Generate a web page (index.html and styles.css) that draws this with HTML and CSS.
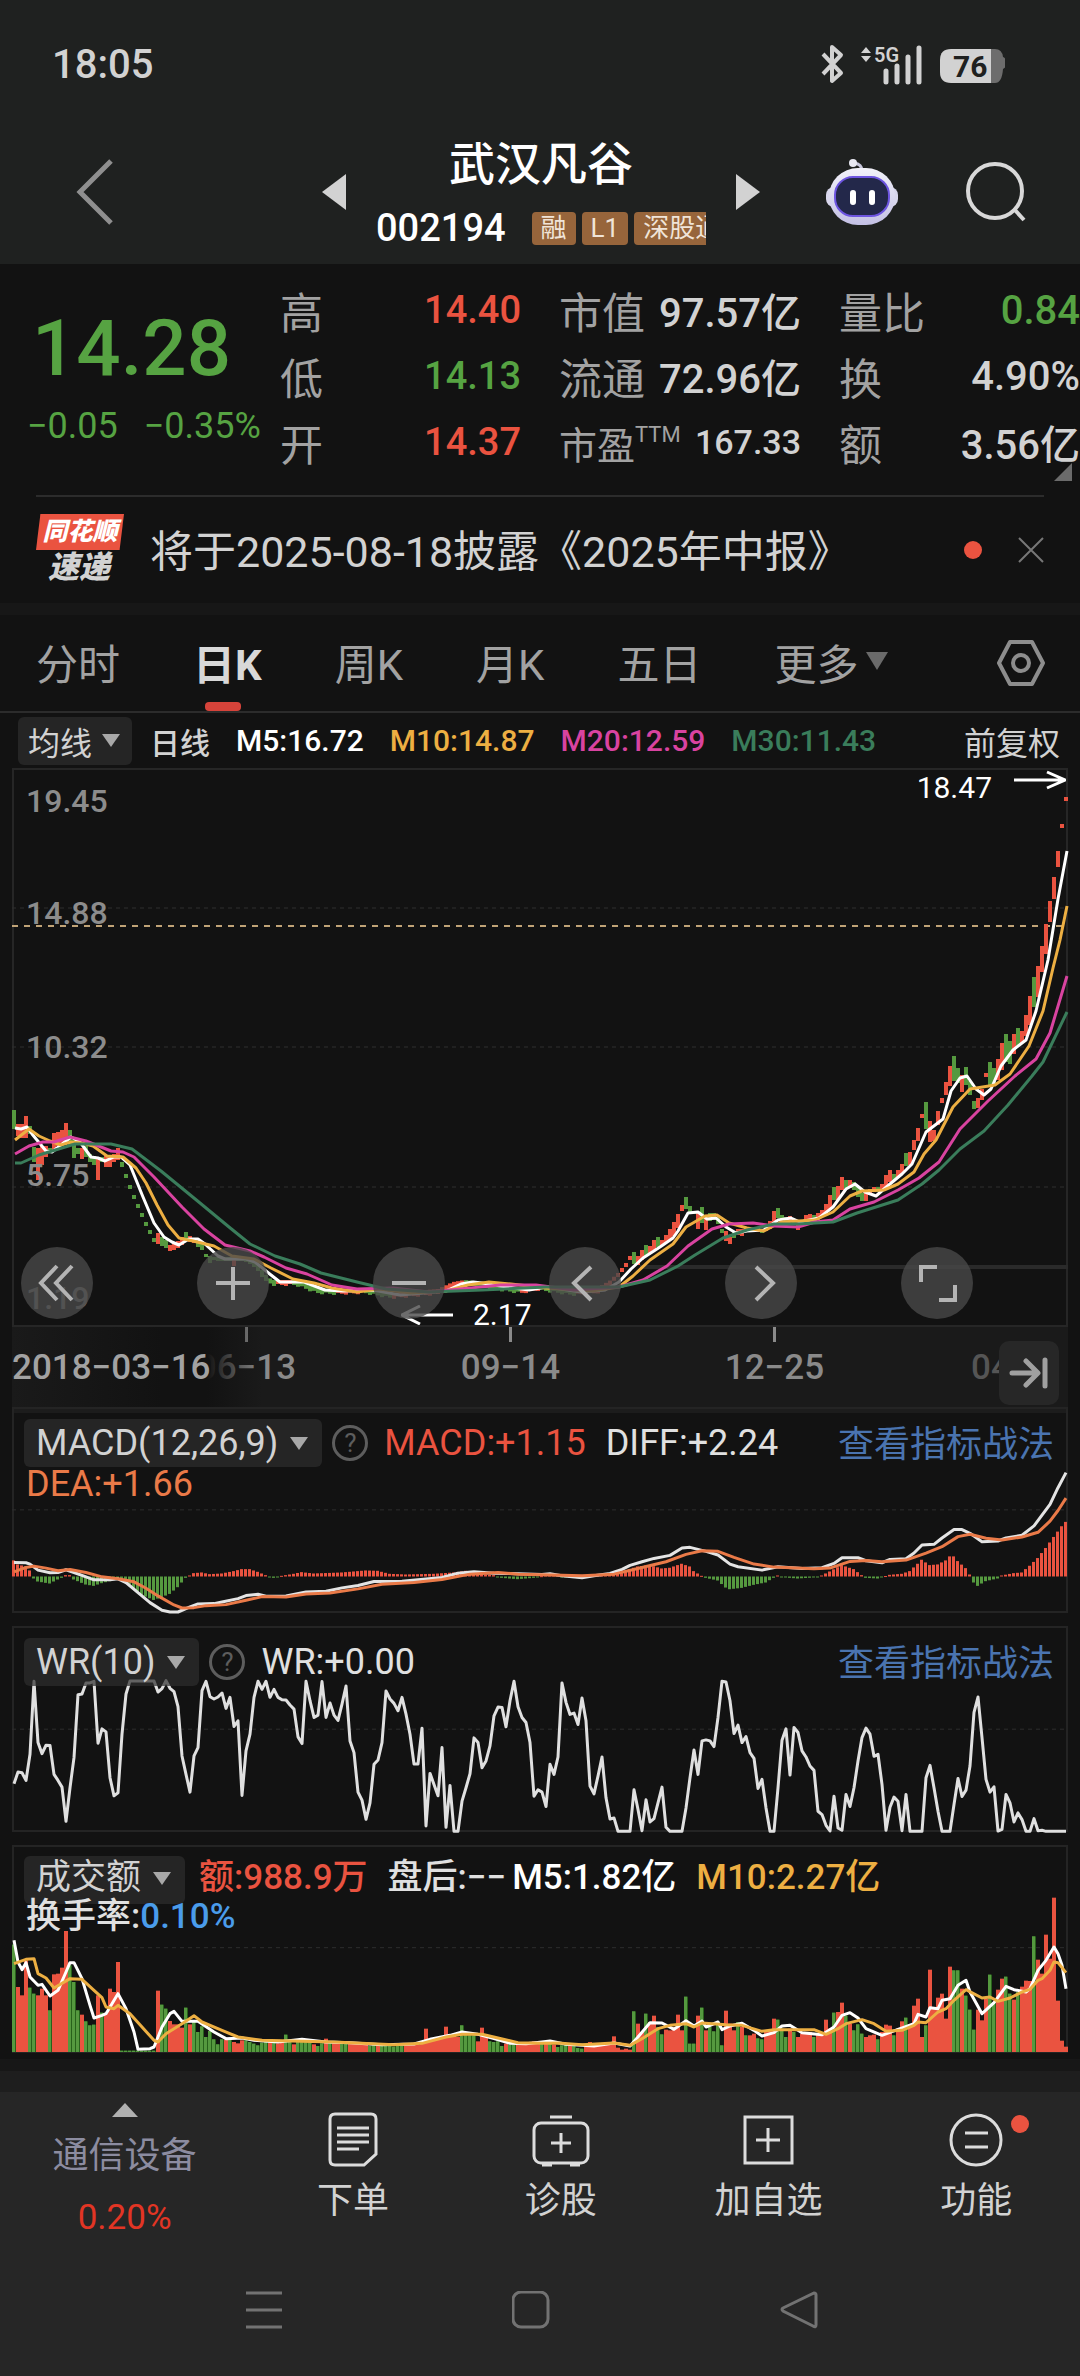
FILE: index.html
```html
<!DOCTYPE html>
<html lang="zh-CN">

<head>
    <meta charset="UTF-8">
    <meta name="viewport" content="width=device-width, initial-scale=1.0">
    <title>武汉凡谷 002194</title>
    <link rel="stylesheet" href="styles.css">
</head>

<body>
    <header class="top">
        <div class="status">
            <span class="clock">18:05</span>
            <svg class="status-icons" width="190" height="44" viewBox="0 0 190 44">
                <path d="M8 12 L26 31 L17 39 V5 L26 13 L8 32" fill="none" stroke="#d2d2d2" stroke-width="4" stroke-linejoin="round" />
                <path d="M46 11 L51 5 L56 11 Z M46 14 H56 L51 20 Z" fill="#d2d2d2" />
                <text x="59" y="20" class="net">5G</text>
                <path d="M71 40 V29 M82 40 V24 M93 40 V15 M104 40 V6" stroke="#d2d2d2" stroke-width="5" stroke-linecap="round" />
                <path d="M175 7 h5 q7 0 8 8 q3 1 3 5 v2 q0 4 -3 5 q-1 14 -8 14 h-5 z" fill="#6d6d6d" />
                <path d="M136 7 H176 V41 H136 Q125 41 125 30 V18 Q125 7 136 7 Z" fill="#d2d2d2" />
                <text x="138" y="35" class="level">76</text>
            </svg>
        </div>
        <div class="title-bar">
            <button class="icon-btn back" aria-label="返回">
                <svg width="40" height="66" viewBox="0 0 40 66">
                    <path d="M36 2 L5 33 L36 64" fill="none" stroke="#8f8f8f" stroke-width="5" />
                </svg>
            </button>
            <div class="stock">
                <button class="icon-btn" aria-label="上一只"><svg width="24" height="36"><path d="M24 0 V36 L0 18 Z" fill="#d2d2d2" /></svg></button>
                <div class="stock-name">
                    <h1>武汉凡谷</h1>
                    <div class="stock-code">
                        <span class="code">002194</span>
                        <span class="tags"><i>融</i><i>L1</i><i>深股通</i></span>
                    </div>
                </div>
                <button class="icon-btn" aria-label="下一只"><svg width="24" height="36"><path d="M0 0 V36 L24 18 Z" fill="#d2d2d2" /></svg></button>
            </div>
            <button class="icon-btn robot" aria-label="智能助手">
                <svg width="72" height="68" viewBox="0 0 72 68">
                    <defs>
                        <linearGradient id="shell" x1="0" y1="0" x2="0" y2="1">
                            <stop offset="0" stop-color="#f2f2fa" />
                            <stop offset="1" stop-color="#c3c0e4" />
                        </linearGradient>
                    </defs>
                    <path d="M36 13 Q36 6 28 5" fill="none" stroke="#c9c8dd" stroke-width="3" />
                    <circle cx="27" cy="5" r="4" fill="#e8e8f2" />
                    <rect x="0" y="29" width="72" height="20" rx="8" fill="#d8d7ec" />
                    <rect x="3" y="10" width="66" height="57" rx="29" fill="url(#shell)" />
                    <rect x="9" y="19" width="54" height="39" rx="18" fill="#23284a" stroke="#6d55e0" stroke-width="2" />
                    <path d="M27 35 V44 M46 35 V44" stroke="#fff" stroke-width="6" stroke-linecap="round" />
                </svg>
            </button>
            <button class="icon-btn search" aria-label="搜索">
                <svg width="64" height="64" viewBox="0 0 64 64">
                    <circle cx="31" cy="31" r="27" fill="none" stroke="#d8d8d8" stroke-width="4" />
                    <path d="M50 49 L60 60" stroke="#d8d8d8" stroke-width="4" />
                </svg>
            </button>
        </div>
    </header>

    <section class="quote">
        <div class="price">
            <strong>14.28</strong>
            <div class="change"><span>−0.05</span><span>−0.35%</span></div>
        </div>
        <dl class="col-a">
            <div><dt>高</dt><dd class="up">14.40</dd></div>
            <div><dt>低</dt><dd class="down">14.13</dd></div>
            <div><dt>开</dt><dd class="up">14.37</dd></div>
        </dl>
        <dl class="col-b">
            <div><dt>市值</dt><dd>97.57亿</dd></div>
            <div><dt>流通</dt><dd>72.96亿</dd></div>
            <div><dt class="pe">市盈<sup>TTM</sup></dt><dd class="pe-value">167.33</dd></div>
        </dl>
        <dl class="col-c">
            <div><dt>量比</dt><dd class="down">0.84</dd></div>
            <div><dt>换</dt><dd>4.90%</dd></div>
            <div><dt>额</dt><dd>3.56亿</dd></div>
        </dl>
        <svg class="expand" width="18" height="18"><path d="M18 0 V18 H0 Z" fill="#6b6b6b" /></svg>
    </section>

    <section class="notice">
        <div class="notice-logo"><b>同花顺</b><em>速递</em></div>
        <a href="#notice">将于2025-08-18披露《2025年中报》</a>
        <span class="dot"></span>
        <button class="icon-btn" aria-label="关闭">
            <svg width="26" height="26"><path d="M1 1 L25 25 M25 1 L1 25" stroke="#777" stroke-width="2" /></svg>
        </button>
    </section>

    <nav class="tabs">
        <button>分时</button>
        <button class="active">日K</button>
        <button>周K</button>
        <button>月K</button>
        <button>五日</button>
        <button>更多<svg class="caret" width="22" height="18"><path d="M0 0 H22 L11 18 Z" fill="#6a6a6a" /></svg></button>
        <button class="settings" aria-label="设置">
            <svg width="50" height="48" viewBox="0 0 50 48">
                <path d="M14 3 H36 L47 24 L36 45 H14 L3 24 Z" fill="none" stroke="#8d8d8d" stroke-width="4" stroke-linejoin="round" />
                <circle cx="25" cy="24" r="8" fill="none" stroke="#8d8d8d" stroke-width="4" />
            </svg>
        </button>
    </nav>

    <div class="ma-bar">
        <button class="chip">均线<svg class="caret" width="18" height="13"><path d="M0 0 H18 L9 13 Z" fill="#a8a8a8" /></svg></button>
        <span class="day">日线</span>
        <span class="m5">M5:16.72</span>
        <span class="m10">M10:14.87</span>
        <span class="m20">M20:12.59</span>
        <span class="m30">M30:11.43</span>
        <button class="adjust">前复权</button>
    </div>

    <main>
        <section class="kline">
            <svg id="kline" viewBox="12 768 1056 559" preserveAspectRatio="none"></svg>
            <span class="scale scale-1">19.45</span>
            <span class="scale scale-2">14.88</span>
            <span class="scale scale-3">10.32</span>
            <span class="scale scale-4">5.75</span>
            <span class="scale scale-5">1.19</span>
            <div class="mark high">18.47<svg width="52" height="20"><path d="M0 10 H50 M33 2 L51 10 L33 18" fill="none" stroke="#fff" stroke-width="3" /></svg></div>
            <div class="mark low"><svg width="52" height="20"><path d="M52 10 H2 M19 1 L1 10 L19 19" fill="none" stroke="#fff" stroke-width="3" /></svg>2.17</div>
            <div class="tools">
                <button aria-label="最早"><svg viewBox="0 0 72 72"><path d="M36 19 L20 36 L36 53 M51 19 L35 36 L51 53" /></svg></button>
                <button aria-label="放大"><svg viewBox="0 0 72 72"><path d="M36 20 V53 M19 36 H53" /></svg></button>
                <button aria-label="缩小"><svg viewBox="0 0 72 72"><path d="M19 36 H53" /></svg></button>
                <button aria-label="左移"><svg viewBox="0 0 72 72"><path d="M42 20 L25 36 L42 53" /></svg></button>
                <button aria-label="右移"><svg viewBox="0 0 72 72"><path d="M31 20 L48 36 L31 53" /></svg></button>
                <button aria-label="全屏"><svg viewBox="0 0 72 72"><path d="M20 35 V20 H36 M38 53 H54 V38" /></svg></button>
            </div>
        </section>

        <div class="dates">
            <span class="tick t1">06−13</span>
            <span class="tick t2">09−14</span>
            <span class="tick t3">12−25</span>
            <span class="tick t4">04</span>
            <span class="first">2018−03−16</span>
            <button class="latest" aria-label="最新">
                <svg width="40" height="32"><path d="M3 16 H27 M17 4 L29 16 L17 28 M36 3 V29" fill="none" stroke="#a0a0a0" stroke-width="5" stroke-linecap="round" stroke-linejoin="round" /></svg>
            </button>
        </div>

        <section class="panel macd">
            <svg id="macd" viewBox="0 21 1056 615" preserveAspectRatio="none"></svg>
            <div class="legend">
                <button class="chip">MACD(12,26,9)<svg class="caret" width="18" height="13"><path d="M0 0 H18 L9 13 Z" fill="#a8a8a8" /></svg></button>
                <button class="help">?</button>
                <span class="up">MACD:+1.15</span>
                <span>DIFF:+2.24</span>
                <a href="#macd">查看指标战法</a>
            </div>
            <div class="legend second"><span class="dea">DEA:+1.66</span></div>
        </section>

        <section class="panel wr">
            <svg id="wr" viewBox="0 17 1056 615" preserveAspectRatio="none"></svg>
            <div class="legend">
                <button class="chip">WR(10)<svg class="caret" width="18" height="13"><path d="M0 0 H18 L9 13 Z" fill="#a8a8a8" /></svg></button>
                <button class="help">?</button>
                <span>WR:+0.00</span>
                <a href="#wr">查看指标战法</a>
            </div>
        </section>

        <section class="panel amount">
            <svg id="amount" viewBox="0 29 1056 624" preserveAspectRatio="none"></svg>
            <div class="legend">
                <button class="chip">成交额<svg class="caret" width="18" height="13"><path d="M0 0 H18 L9 13 Z" fill="#a8a8a8" /></svg></button>
                <span class="up">额:988.9万</span>
                <span class="after">盘后:−−</span>
                <span class="m5">M5:1.82亿</span>
                <span class="m10">M10:2.27亿</span>
            </div>
            <div class="legend second"><span>换手率:<b>0.10%</b></span></div>
        </section>
    </main>

    <footer>
        <nav class="actions">
            <a href="#sector" class="sector">
                <svg width="26" height="14"><path d="M13 0 L26 14 H0 Z" fill="#b0b0b0" /></svg>
                <span>通信设备</span>
                <b>0.20%</b>
            </a>
            <a href="#order">
                <svg width="60" height="56" viewBox="0 0 60 56">
                    <path d="M12 2 H48 Q53 2 53 7 V42 L41 53 H12 Q7 53 7 48 V7 Q7 2 12 2 Z M14 16 H46 M14 23 H46 M14 30 H46 M14 37 H36" />
                </svg>
                <span>下单</span>
            </a>
            <a href="#diagnose">
                <svg width="60" height="56" viewBox="0 0 60 56">
                    <rect x="3" y="11" width="54" height="40" rx="7" />
                    <path d="M19 5 H41 M11 53 H21 M39 53 H49 M30 21 V41 M20 31 H40" />
                </svg>
                <span>诊股</span>
            </a>
            <a href="#watch">
                <svg width="60" height="56" viewBox="0 0 60 56">
                    <path d="M7 5 H54 V51 H7 Z M30 16 V40 M18 28 H42" />
                </svg>
                <span>加自选</span>
            </a>
            <a href="#more">
                <svg width="60" height="56" viewBox="0 0 60 56">
                    <circle cx="30" cy="28" r="25" />
                    <path d="M19 21 H42 M19 35 H42" />
                </svg>
                <span>功能</span>
                <i class="dot"></i>
            </a>
        </nav>
        <div class="system">
            <button class="icon-btn" aria-label="任务"><svg width="36" height="38"><path d="M0 2 H36 M0 19 H36 M0 36 H36" /></svg></button>
            <button class="icon-btn" aria-label="主页"><svg width="38" height="38"><rect x="1" y="1" width="35" height="35" rx="8" /></svg></button>
            <button class="icon-btn" aria-label="返回"><svg width="38" height="38"><path d="M34 2 Q36 2 36 4 V34 Q36 37 33 35 L3 20 Q1 18 3 17 Z" /></svg></button>
        </div>
    </footer>

    <script src="charts.js"></script>
</body>

</html>
```
FILE: styles.css
```css
* {
    box-sizing: border-box;
}

body {
    margin: 0;
    background: #121212;
    color: #d2d2d2;
    font-family: Roboto, "Noto Sans CJK SC", sans-serif;
}

button {
    border: none;
    padding: 0;
    background: none;
    color: inherit;
    font: inherit;
    cursor: pointer;
}

a {
    color: inherit;
    text-decoration: none;
}

svg {
    display: block;
}

.up {
    color: #ea5340;
}

.down {
    color: #56a342;
}

.dot {
    width: 18px;
    height: 18px;
    border-radius: 50%;
    background: #ea5340;
}

/* header */
.top {
    height: 264px;
    background: #1f2120;
}

.status {
    display: flex;
    justify-content: space-between;
    align-items: center;
    height: 128px;
    padding: 0 75px 0 52px;
}

.clock {
    font-size: 40px;
    font-weight: 500;
}

.net {
    font-size: 20px;
    font-weight: 600;
    fill: #d2d2d2;
}

.level {
    font-size: 30px;
    font-weight: 700;
    fill: #1f2120;
}

.title-bar {
    display: flex;
    align-items: center;
    height: 128px;
    padding: 0 52px 0 75px;
}

.stock {
    display: flex;
    align-items: center;
    justify-content: space-between;
    width: 438px;
    margin: 0 66px 0 auto;
}

.stock-name {
    width: 330px;
    height: 128px;
}

h1 {
    margin: 0;
    padding-top: 4px;
    font-size: 46px;
    line-height: 64px;
    font-weight: 500;
    color: #fff;
    text-align: center;
}

.stock-code {
    display: flex;
    align-items: center;
    height: 64px;
    gap: 26px;
    overflow: hidden;
}

.code {
    font-size: 38px;
    font-weight: 500;
    color: #fff;
}

.tags {
    display: flex;
    gap: 6px;
    flex: 1;
    overflow: hidden;
}

.tags i {
    flex: none;
    padding: 0 9px;
    border-radius: 4px;
    background: #97653b;
    color: #f0e4d8;
    font-size: 26px;
    line-height: 33px;
    font-style: normal;
}

.robot {
    margin-right: 66px;
}

/* quote */
.quote {
    position: relative;
    display: grid;
    grid-template-columns: 242px 241px 242px 241px;
    column-gap: 38px;
    height: 231px;
    padding-top: 13px;
}

.price {
    width: 270px;
    padding: 24px 0 0 27px;
    color: #56a342;
}

.price strong {
    display: block;
    padding-left: 5px;
    font-size: 78px;
    line-height: 96px;
    font-weight: 500;
}

.change {
    display: flex;
    gap: 26px;
    font-size: 36px;
    line-height: 58px;
}

dl {
    margin: 0;
}

dl div {
    display: flex;
    justify-content: space-between;
    align-items: center;
    height: 66px;
}

dt {
    font-size: 43px;
    color: #a2a2a2;
}

dd {
    margin: 0;
    font-size: 40px;
    font-weight: 500;
    white-space: nowrap;
}

.col-a dd {
    font-size: 38px;
}

dt.pe {
    display: flex;
    font-size: 38px;
}

.pe sup {
    font-size: 22px;
    line-height: 40px;
}

dd.pe-value {
    font-size: 34px;
}

.expand {
    position: absolute;
    right: 8px;
    bottom: 14px;
}

/* notice */
.notice {
    display: flex;
    align-items: center;
    height: 108px;
    margin: 0 36px;
    border-top: 2px solid #2c2c2c;
}

.notice a {
    flex: 1;
    padding-bottom: 4px;
    font-size: 43px;
    white-space: nowrap;
}

.notice .dot {
    margin-right: 36px;
}

.notice-logo {
    width: 114px;
    line-height: 36px;
    text-align: center;
}

.notice-logo b {
    position: relative;
    display: block;
    width: 88px;
    background: #ea5340;
    clip-path: polygon(5% 0, 100% 0, 95% 100%, 0 100%);
    color: #fff;
    font-size: 25px;
    font-style: italic;
    font-weight: 900;
}

.notice-logo em {
    display: block;
    width: 86px;
    font-size: 31px;
    font-weight: 900;
}

/* tabs */
.tabs {
    display: flex;
    align-items: center;
    height: 110px;
    padding: 0 34px 0 36px;
    border-top: 12px solid #171717;
    border-bottom: 2px solid #2c2c2c;
    font-size: 42px;
    color: #a2a2a2;
}

.tabs button {
    display: flex;
    align-items: center;
    height: 100%;
    margin-right: 73px;
    padding-bottom: 4px;
}

.tabs .active {
    position: relative;
    color: #d8d8d8;
    font-weight: 700;
}

.tabs .active::after {
    content: "";
    position: absolute;
    left: 12px;
    bottom: 0;
    width: 36px;
    height: 9px;
    border-radius: 4px;
    background: #d6433a;
}

.tabs .caret {
    margin-left: 8px;
}

.tabs .settings {
    margin: 0 0 0 auto;
    padding: 0;
}

/* chips and moving averages */
.chip {
    display: flex;
    align-items: center;
    height: 48px;
    padding: 0 14px 0 12px;
    border-radius: 6px;
    background: rgba(45, 45, 45, 0.7);
    white-space: nowrap;
}

.chip .caret {
    margin-left: 12px;
}

.ma-bar {
    display: flex;
    align-items: center;
    height: 55px;
    padding: 0 20px 0 18px;
    gap: 26px;
    font-size: 30px;
    font-weight: 500;
}

.ma-bar .chip {
    margin-right: -8px;
    padding: 0 12px 0 10px;
    font-size: 32px;
    font-weight: 400;
}

.ma-bar .caret {
    margin-left: 10px;
}

.adjust {
    margin-left: auto;
    font-size: 32px;
    font-weight: 400;
}

.m5 {
    color: #fff;
}

.m10 {
    color: #edaf42;
}

.m20 {
    color: #d943a0;
}

.m30 {
    color: #3a7d5b;
}

/* candles */
main {
    padding: 0 12px;
}

.kline {
    position: relative;
    height: 559px;
    box-shadow: inset 0 0 0 2px #262626;
}

.kline > svg,
.panel > svg {
    position: absolute;
    inset: 0;
    width: 100%;
    height: 100%;
    overflow: visible;
}

.kline polyline,
.panel polyline,
.grid {
    fill: none;
    vector-effect: non-scaling-stroke;
    stroke-linejoin: round;
}

.grid {
    stroke: #2e2e2e;
    stroke-width: 1;
    stroke-dasharray: 4 4;
}

.last-price {
    stroke: #c0a377;
    stroke-width: 2;
    stroke-dasharray: 6 6;
}

.level-line {
    stroke: #2a2a2a;
    stroke-width: 4;
}

.scale {
    position: absolute;
    left: 14px;
    font-size: 32px;
    line-height: 32px;
    font-weight: 500;
    color: #8c8c8c;
}

.scale-1 { top: 3%; }
.scale-2 { top: 23%; }
.scale-3 { top: 47%; }
.scale-4 { top: 70%; }
.scale-5 { top: 92%; color: #7a7a7a; }

.mark {
    position: absolute;
    display: flex;
    align-items: center;
    font-size: 30px;
    line-height: 30px;
    color: #fff;
}

.high {
    top: 2px;
    right: 2px;
    gap: 22px;
}

.high svg {
    margin-bottom: 16px;
}

.low {
    left: 389px;
    bottom: -3px;
    gap: 20px;
}

.tools {
    position: absolute;
    left: 9px;
    right: 95px;
    bottom: 8px;
    display: flex;
    justify-content: space-between;
}

.tools button {
    width: 72px;
    height: 72px;
    border-radius: 50%;
    background: rgba(72, 72, 72, 0.8);
}

.tools path {
    fill: none;
    stroke: #b4b4b4;
    stroke-width: 4;
}

/* date axis */
.dates {
    position: relative;
    height: 80px;
    background: #1a1a1a;
    font-size: 35px;
    line-height: 82px;
    font-weight: 500;
    color: #8a8a8a;
}

.first {
    position: absolute;
    left: 0;
    width: 250px;
    height: 80px;
    color: #a2a2a2;
    background: linear-gradient(90deg, #1a1a1a, #121212 60%, #121212 78%, transparent);
}

.tick {
    position: absolute;
    width: 120px;
    margin-left: -60px;
    text-align: center;
}

.tick::before {
    content: "";
    position: absolute;
    left: 59px;
    top: 0;
    width: 3px;
    height: 15px;
    background: #8a8a8a;
}

.t1 { left: 22.2%; }
.t2 { left: 47.2%; }
.t3 { left: 72.2%; }
.t4 { left: 92.7%; color: #555; }

.t4::before {
    display: none;
}

.latest {
    position: absolute;
    right: 9px;
    top: 14px;
    display: flex;
    align-items: center;
    justify-content: center;
    width: 60px;
    height: 64px;
    border-radius: 10px;
    background: #272727;
}

/* indicator panels */
.panel {
    position: relative;
    height: 206px;
    margin-bottom: 13px;
    padding-top: 12px;
    box-shadow: inset 0 0 0 2px #242424;
    font-size: 36px;
    color: #e0e0e0;
}

.macd {
    box-shadow: inset 0 0 0 2px #242424, inset 0 6px #1c1c1c;
}

.amount {
    height: 208px;
    margin-bottom: 6px;
    padding-top: 11px;
    font-size: 35px;
}

.legend {
    position: relative;
    display: flex;
    align-items: center;
    height: 48px;
    margin: 0 14px 0 12px;
    gap: 20px;
    white-space: nowrap;
}

.amount .legend {
    font-weight: 500;
}

.legend .chip {
    margin-right: -10px;
    font-weight: 400;
    color: #d2d2d2;
}

.legend a {
    margin-left: auto;
    padding-bottom: 4px;
    color: #4a74b0;
}

.legend.second {
    height: 34px;
    margin: 0 14px;
}

.help {
    width: 36px;
    height: 36px;
    margin-right: -4px;
    border: 3px solid #5d5d5d;
    border-radius: 50%;
    color: #5d5d5d;
    font-size: 26px;
    line-height: 30px;
}

.dea {
    color: #ea7a48;
}

.amount .chip,
.amount span {
    line-height: 44px;
    padding-bottom: 4px;
}

.amount .chip {
    margin-right: -6px;
}

.amount .after {
    margin-right: -14px;
}

.amount .second {
    height: 30px;
}

.second b {
    font-weight: 500;
    color: #4a9ceb;
}

/* footer */
footer {
    background: #262626;
    border-top: 12px solid #171717;
}

.actions {
    display: grid;
    grid-template-columns: 6fr 5fr 5fr 5fr 5fr;
    height: 180px;
    padding-top: 20px;
    border-top: 21px solid #1e1e1e;
    font-size: 36px;
}

.actions a {
    position: relative;
    display: flex;
    flex-direction: column;
    align-items: center;
    gap: 4px;
    line-height: 58px;
}

.actions svg {
    fill: none;
    stroke: #dcdcdc;
    stroke-width: 3;
}

.actions .sector {
    margin-top: -9px;
    color: #8c8ca0;
}

.sector svg {
    margin-bottom: 6px;
    stroke: none;
}

.sector b {
    color: #e23524;
    font-size: 35px;
    font-weight: 400;
}

.actions .dot {
    position: absolute;
    left: 67%;
    top: 3px;
}

.system {
    display: flex;
    justify-content: space-between;
    padding: 40px 262px 47px 246px;
}

.system svg {
    fill: none;
    stroke: #727272;
    stroke-width: 3;
}
```
FILE: charts.js
```js
const NS = 'http://www.w3.org/2000/svg'
const RED = '#ea5340'
const GREEN = '#55993f'
const STEP = 4
const COUNT = 264

function add(svg, name, attrs) {
    const node = document.createElementNS(NS, name)
    for (const key in attrs) node.setAttribute(key, attrs[key])
    svg.appendChild(node)
    return node
}

// 'a,b c,d' -> [[a, b], [c, d]]
function pairs(text) {
    return text.trim().split(/\s+/).map(p => p.split(',').map(Number))
}

// value at x on the straight line between two known points
function valueAt(points, x) {
    for (let i = 1; i < points.length; i++) {
        const [x0, y0] = points[i - 1]
        const [x1, y1] = points[i]
        if (x <= x1) return y0 + (y1 - y0) * (x - x0) / (x1 - x0)
    }
    return points[points.length - 1][1]
}

function line(svg, points, color, width) {
    add(svg, 'polyline', { points: points.join(' '), stroke: color, 'stroke-width': width })
}

function byIndex(text) {
    return pairs(text).map(([i, y]) => [i * STEP + 2, y])
}

function gridLine(svg, y, x1, x2, cls) {
    add(svg, 'line', { x1: x1, x2: x2, y1: y, y2: y, class: cls })
}

// ---- daily candles ----
const ma5 = pairs(`15,1128 21,1129 27,1127 32,1134 46,1151 52,1152 61,1145 71,1137 80,1142 91,1157 98,1158 105,1161
114,1157 121,1157 130,1165 143,1197 154,1223 164,1237 172,1242 179,1245 189,1239 198,1239 205,1244 218,1256 225,1259
246,1259 255,1262 271,1275 280,1282 304,1282 325,1290 343,1291 373,1290 400,1295 446,1291 461,1284 473,1282 482,1283
507,1287 529,1290 546,1287 561,1289 581,1292 605,1290 619,1282 631,1269 643,1258 660,1247 673,1238 678,1231 688,1213
698,1212 707,1219 716,1218 726,1227 736,1233 747,1231 764,1230 778,1220 791,1218 800,1222 819,1218 833,1207 846,1189
855,1184 865,1192 876,1196 884,1189 902,1174 912,1164 919,1148 926,1132 943,1119 951,1091 960,1078 967,1076 976,1089
984,1095 991,1089 1001,1066 1013,1050 1026,1040 1036,1011 1048,960 1058,899 1067,851`)
const ma10 = pairs(`15,1140 29,1129 39,1136 50,1141 61,1145 71,1142 82,1143 93,1146 107,1156 123,1157 136,1168 146,1183
157,1205 168,1225 179,1238 193,1241 214,1246 232,1256 254,1259 271,1268 293,1279 314,1283 332,1288 357,1292 379,1289
411,1293 446,1291 468,1285 489,1282 511,1284 546,1288 592,1291 619,1287 633,1276 650,1260 673,1244 686,1227 705,1216
717,1215 729,1223 747,1228 764,1231 781,1222 815,1220 833,1212 850,1196 862,1191 884,1190 898,1184 914,1172 924,1154
936,1140 953,1107 970,1089 995,1085 1010,1074 1029,1046 1043,1011 1053,968 1060,940 1067,906`)
const ma20 = pairs(`15,1154 29,1146 43,1142 54,1142 70,1137 86,1141 111,1151 123,1152 134,1157 154,1177 182,1207 204,1229
225,1245 250,1251 264,1257 286,1268 307,1274 332,1285 357,1289 393,1288 429,1292 471,1288 500,1285 536,1285 574,1290
619,1287 643,1280 667,1266 688,1246 712,1229 729,1224 753,1223 774,1226 798,1227 815,1222 833,1220 850,1209 874,1202
898,1190 919,1178 939,1162 960,1129 988,1101 1015,1076 1036,1059 1050,1033 1067,976`)
const ma30 = pairs(`15,1163 21,1163 39,1155 75,1144 111,1144 132,1149 161,1171 200,1203 229,1227 250,1244 275,1256 300,1264
321,1273 357,1282 386,1289 429,1292 482,1290 546,1287 574,1287 619,1287 650,1280 678,1266 695,1255 723,1238 747,1230
774,1224 798,1224 833,1222 857,1213 898,1200 922,1184 939,1170 960,1149 984,1131 1008,1105 1032,1076 1043,1062 1067,1012`)

// colour, high, low
const opening = `g1110-1129 r1124-1136 r1124-1138 r1116-1138 g1126-1134 g1147-1162 r1148-1180 r1146-1165 r1146-1157
g1148-1153 r1133-1150 r1132-1146 r1130-1145 r1123-1142 g1130-1146 g1140-1158 g1148-1154 r1148-1159 g1146-1157 g1154-1162
g1156-1165 r1158-1180 g1157-1162 r1155-1167 r1155-1167 r1154-1162 r1148-1160 g1162-1167 g1174-1178 g1185-1189 g1195-1199
g1204-1208 g1213-1217 g1222-1226 g1230-1234 g1238-1242 r1233-1244 g1237-1246 g1240-1248 r1245-1251 r1244-1250 r1241-1248
r1237-1245 g1232-1240 r1236-1242 r1240-1243 g1240-1247 g1244-1250 g1254-1257 g1256-1263 g1257-1260 g1257-1261 g1257-1261
g1257-1261 g1257-1261 r1257-1266 g1257-1261 g1257-1261 g1258-1262 g1259-1264 g1262-1267 g1265-1271 g1270-1277 g1275-1281`
const rally = `r1273-1277 r1268-1272 r1263-1267 r1256-1260 g1252-1264 r1256-1265 r1250-1260 g1245-1256 r1246-1254 r1240-1250
g1237-1247 r1240-1246 r1235-1243 r1229-1240 r1222-1236 r1214-1228 r1205-1211 g1197-1209 g1206-1213 g1211-1214 r1213-1229
g1207-1223 r1217-1230 g1213-1221 g1213-1220 g1217-1224 g1229-1233 r1231-1241 r1237-1244 g1232-1238 r1229-1235 r1229-1236
r1228-1232 r1228-1231 r1228-1232 r1228-1232 g1229-1233 r1226-1231 r1221-1229 r1211-1224 g1208-1218 g1215-1220 g1217-1222
r1216-1222 g1219-1225 r1222-1230 g1220-1226 r1215-1221 r1214-1220 g1215-1220 r1213-1219 r1210-1217 r1204-1214 r1195-1209
g1187-1200 r1186-1200 r1177-1190 g1180-1188 r1180-1188 g1182-1190 g1187-1197 g1193-1201 r1193-1201 r1189-1195 r1187-1192
g1187-1192 r1184-1190 r1175-1187 r1170-1182 g1174-1181 r1170-1178 r1164-1174 g1153-1166 r1152-1165 r1140-1150 r1128-1141
r1114-1118 g1102-1129 r1121-1142 r1130-1141 r1111-1125 r1098-1103 r1082-1095 r1066-1086 g1056-1081 g1068-1083 r1075-1092
g1067-1085 g1081-1095 g1101-1109 r1098-1108 r1089-1100 r1073-1077 g1062-1087 g1068-1085 r1059-1080 r1043-1070 g1034-1062
g1041-1064 r1034-1054 g1028-1046 r1031-1043 r1015-1036 r996-1025 g977-1007 r966-997 r946-972 r924-954 r901-922 r877-899
r851-867 r824-828 r797-801`

function candle(svg, i, color, high, low) {
    add(svg, 'rect', { x: 12 + i * STEP, y: high, width: STEP, height: low - high, fill: color })
}

function drawCandles(svg, text, start) {
    text.trim().split(/\s+/).forEach((bar, n) => {
        const [high, low] = bar.slice(1).split('-').map(Number)
        candle(svg, start + n, bar[0] === 'r' ? RED : GREEN, high, low)
    })
}

function drawKline() {
    const svg = document.getElementById('kline')
    for (const y of [908, 1047, 1187]) gridLine(svg, y, 12, 1068, 'grid')
    gridLine(svg, 1267, 640, 1068, 'level-line')
    gridLine(svg, 926, 12, 1068, 'last-price')
    drawCandles(svg, opening, 0)
    // sideways stretch: small bodies that lead the 5-day average
    for (let i = 64; i < 151; i++) {
        const x = 14 + i * STEP
        const y = valueAt(ma5, x + 8)
        const rising = valueAt(ma5, x + 12) <= valueAt(ma5, x + 4)
        candle(svg, i, rising ? RED : GREEN, y - 2, y + 2 + i % 3)
    }
    drawCandles(svg, rally, 151)
    line(svg, ma5, '#ffffff', 3)
    line(svg, ma10, '#edaf42', 3)
    line(svg, ma20, '#d943a0', 3)
    line(svg, ma30, '#3a7d5b', 3)
}

// ---- MACD ----
const diff = byIndex(`0,485 3,486 4,490 6,508 9,516 11,515 13,507 15,515 18,528 20,537 24,537 26,534 28,545 31,575 34,605
37,628 39,633 41,633 44,618 46,609 50,608 52,603 56,593 58,584 61,580 63,586 68,585 73,573 78,571 82,561 86,554 90,542
97,541 107,530 111,517 115,513 120,517 126,519 132,521 134,519 137,525 142,531 145,525 149,518 152,506 154,494 157,483
160,473 164,464 167,442 169,440 173,452 176,463 179,490 181,498 187,508 191,498 197,503 202,501 205,488 207,471 211,471
213,480 217,486 219,476 223,474 225,457 227,433 230,431 232,412 235,387 237,387 239,398 242,423 246,421 248,412 252,404
255,376 259,312 261,262 263,217`)
const dea = byIndex(`0,513 3,500 5,496 8,502 11,510 14,506 18,515 22,528 26,534 30,543 33,562 36,585 40,612 42,621 45,620
48,614 53,611 58,598 62,587 68,588 73,579 79,576 86,564 92,550 100,545 107,536 114,520 121,515 126,520 132,522 142,525
150,520 157,500 163,483 168,461 172,450 176,452 180,470 185,490 190,499 200,504 204,502 209,482 213,479 217,483 223,478
228,457 232,438 236,408 239,401 243,413 247,418 252,409 256,395 259,362 261,330 263,293`)
const histogram = pairs(`0,48 1,36 2,33 3,30 4,18 5,-6 6,-15 9,-21 11,-9 12,-4 13,4 14,4 15,-9 18,-24 20,-28 22,-20 26,-8
28,-12 30,-35 32,-55 35,-70 37,-62 39,-52 41,-32 42,-18 43,-4 44,3 45,10 47,12 49,7 52,9 55,16 57,22 59,22 61,14 63,4
65,-4 67,2 70,8 72,13 75,9 82,12 88,18 91,17 94,8 98,6 105,8 110,12 113,17 118,6 120,4 122,-4 126,-8 131,-3 133,5 136,3
138,-3 141,-5 144,3 150,8 153,18 156,30 159,34 162,24 164,26 167,38 169,30 170,16 172,2 173,-4 176,-12 178,-33 179,-38
182,-34 185,-25 188,-18 190,-4 191,3 192,-2 196,-6 200,-3 202,3 204,15 207,34 210,22 212,4 213,-4 216,-6 219,5 222,8
224,16 226,38 227,50 229,34 231,36 233,48 234,60 235,60 236,46 238,25 239,6 240,-18 241,-28 243,-14 246,-6 247,3 250,10
252,12 254,32 256,55 258,85 260,118 262,150 263,163`)

function drawMacd() {
    const svg = document.getElementById('macd')
    const zero = 527
    gridLine(svg, 328, 0, 1056, 'grid')
    for (let i = 0; i < COUNT; i++) {
        const v = valueAt(histogram, i)
        add(svg, 'rect', {
            x: i * STEP,
            y: v > 0 ? zero - v : zero,
            width: 3,
            height: Math.max(Math.abs(v), 3),
            fill: v > 0 ? RED : GREEN
        })
    }
    line(svg, diff, '#e4e4e4', 3)
    line(svg, dea, '#ea7a48', 3)
}

// ---- WR, one reading per bar ----
const wr = `488 453 455 478 400 182 365 398 373 374 460 478 498 600 500 410 222 220 187 187 182 367 324 333 470 524 515
340 220 181 181 181 181 181 181 181 214 204 180 203 213 258 405 460 513 405 380 210 182 228 235 229 217 263 230 317 300
523 390 340 230 182 206 182 230 206 230 237 238 253 265 348 368 182 240 290 283 183 290 247 283 299 250 196 360 395 513
537 594 545 430 417 365 211 235 248 270 230 280 340 429 429 322 614 457 490 524 380 618 493 630 630 540 500 458 351 365
440 420 375 285 259 260 318 240 182 258 290 305 365 525 506 513 556 430 460 408 187 245 281 277 311 232 300 495 518 465
408 530 593 590 630 630 630 630 506 565 628 536 602 592 545 498 618 630 630 630 630 560 470 387 460 360 357 360 377 290
182 184 240 338 313 365 347 395 412 502 475 560 630 630 500 358 324 462 320 335 390 408 435 448 570 580 612 629 525 620
627 520 556 500 420 350 322 340 406 400 490 627 558 528 540 628 520 630 630 630 630 470 433 500 570 630 630 630 550 472
526 507 435 275 229 350 475 513 497 629 624 520 545 602 575 595 630 630 592 628 627 630 630 630 630 630 630`

function drawWr() {
    const svg = document.getElementById('wr')
    gridLine(svg, 325, 0, 1056, 'grid')
    line(svg, wr.split(/\s+/).map((y, i) => [i * STEP + 2, y]), '#e0e0e0', 3)
}

// ---- turnover ----
const amounts = `g328 r455 r480 r375 g457 g475 r480 r460 r480 g525 r417 r415 r397 r287 g390 g440 g525 r538 g558 g570 g568
r480 g532 r535 r460 r470 r380 g646 g646 g646 g646 g646 g646 g646 g646 g646 r466 g508 g520 r557 r567 r567 r577 g517 r567
g555 g590 g573 g605 g587 g612 g627 g612 r612 g612 r620 r624 r615 g615 g620 g625 g630 g622 g618 r620 g618 r624 r620 g598
g612 r627 g615 g612 g614 g616 r627 g632 g624 r610 g622 r618 r622 g617 g620 r624 r624 r624 r624 r624 g632 g630 r628 g632
g630 g630 g634 g632 g632 r628 r628 r628 r628 r625 r580 r610 r612 r610 r605 r574 r605 r600 r605 g570 g590 g600 g600 r618
r577 r605 g618 g620 g618 g632 r625 g628 g628 r624 r624 r624 r620 r618 r624 g625 r620 g625 r628 g635 g630 g625 r630 g632
g638 g640 r630 r620 r624 r628 r625 r625 r625 r603 r637 r643 r640 r643 g528 r565 r590 g535 r560 r541 g575 g597 r583 r585
r575 r538 r585 g484 g625 g625 r541 g517 r585 g575 g588 g562 g630 r526 r565 r585 g560 r575 g600 r600 r595 g609 g612 r590
r585 r550 g553 g580 g605 r580 g590 r605 r595 r590 r590 g605 r595 r590 r553 r580 g532 r530 r502 g541 r565 g585 g567 g595
r605 r600 r598 g612 r590 r568 r571 g600 r580 r558 g547 r575 r511 r490 r605 g570 r403 r520 r487 r475 r550 r394 g405 g405
r460 g481 g523 g583 r523 r555 r490 g418 g500 r463 r430 g424 g475 r493 g470 r454 r436 r437 g303 r373 r415 r298 r370 r187
r496 r616 r634`
const amount5 = byIndex(`0,315 1,380 2,403 3,382 4,425 6,450 7,447 9,482 11,465 13,410 14,382 15,382 17,430 19,510 20,548
22,540 23,535 26,475 28,520 30,590 31,642 34,640 35,635 37,575 39,535 40,528 42,558 46,558 50,590 53,610 57,608 60,615
66,620 72,612 78,620 84,622 92,628 100,626 104,612 109,600 112,590 116,597 120,610 124,624 128,625 132,620 134,617
138,627 145,632 150,623 154,632 156,605 159,562 162,563 165,582 168,556 170,572 172,557 173,575 176,560 177,583 179,572
182,564 185,585 187,602 190,592 192,572 194,570 197,592 202,598 205,575 207,540 209,532 211,548 213,580 217,600 221,582
225,565 226,537 228,545 229,517 231,520 232,495 234,490 236,450 238,435 239,470 242,535 245,502 248,453 250,463 253,470
254,460 256,405 258,375 260,335 261,355 262,390 263,460`)
const amount10 = byIndex(`0,385 3,372 5,370 6,415 8,428 10,458 14,430 17,432 20,465 22,487 23,515 25,520 26,510 29,535
32,575 35,615 36,620 38,595 42,565 45,541 47,560 52,585 56,605 62,615 72,618 80,620 95,628 102,624 108,605 112,597
117,597 121,608 126,622 132,624 136,623 142,628 150,623 154,630 157,610 161,580 164,570 168,565 170,575 172,563 178,568
182,570 187,588 190,583 200,583 203,597 206,580 208,565 212,553 215,565 218,588 222,585 225,570 226,560 228,562 231,530
233,520 235,495 238,463 242,488 244,485 246,498 249,488 252,470 254,462 256,435 257,430 259,405 260,380 261,382 263,412`)

function drawAmount() {
    const svg = document.getElementById('amount')
    gridLine(svg, 337, 0, 1056, 'grid')
    amounts.split(/\s+/).forEach((bar, i) => {
        const y = Number(bar.slice(1))
        const up = bar[0] === 'r'
        add(svg, 'rect', { x: i * STEP, y: y, width: STEP, height: 650 - y, fill: up ? RED : '#27611a' })
        if (!up) add(svg, 'rect', { x: i * STEP, y: y, width: 3, height: 650 - y, fill: GREEN })
    })
    line(svg, amount5, '#ffffff', 3)
    line(svg, amount10, '#edaf42', 3)
}

drawKline()
drawMacd()
drawWr()
drawAmount()
```
